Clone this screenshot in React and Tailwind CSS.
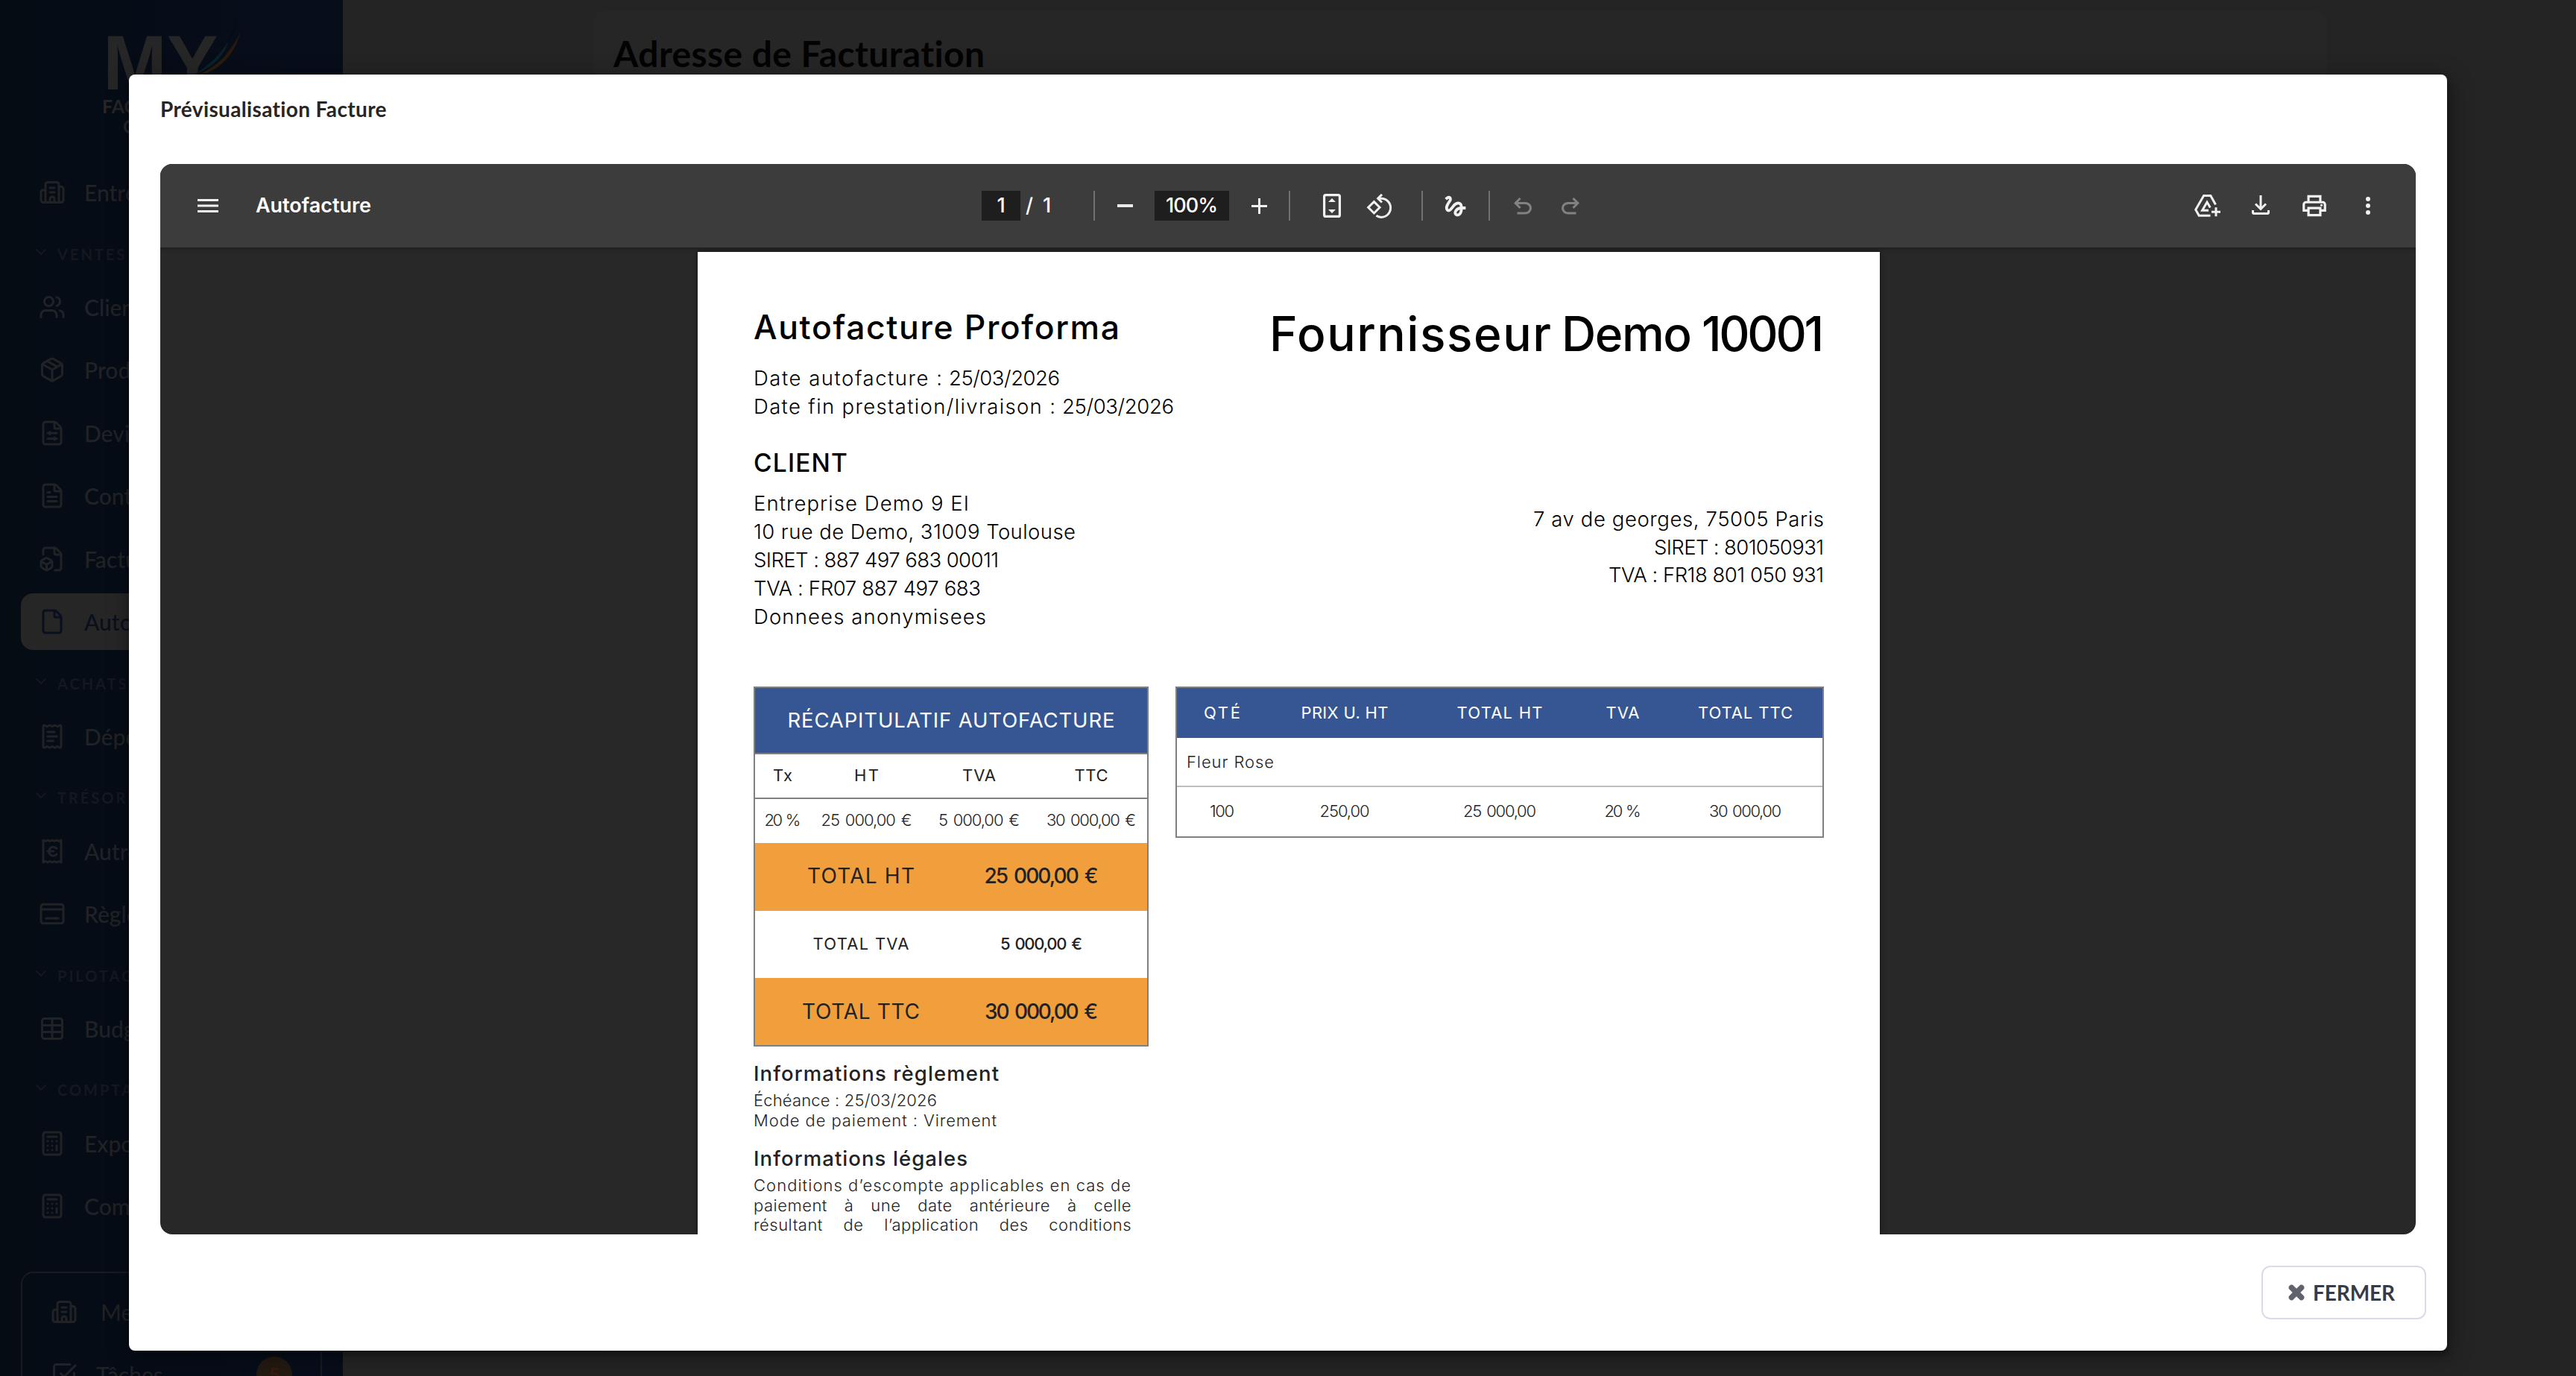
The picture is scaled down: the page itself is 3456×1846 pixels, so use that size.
import { useLayoutEffect, useRef, useState } from "react";
import {
  Building2, Users, Package, FileSliders, FileText, FileBox, File, ReceiptText,
  ReceiptEuro, Table, Calculator, SquareCheckBig, ChevronDown,
} from "lucide-react";
import { MdGesture, MdOutlinePrint } from "react-icons/md";

/* Tracks a single line of text so that it spans the requested width. */
function Fit({ w, className = "", children }) {
  const ref = useRef(null);
  const [ls, setLs] = useState(0);
  useLayoutEffect(() => {
    const el = ref.current;
    const natural = el.getBoundingClientRect().width;
    const n = Math.max(1, String(children).length - 1);
    setLs((w - natural) / n);
  }, []);
  return (
    <span
      ref={ref}
      className={"inline-block whitespace-pre " + className}
      style={{ letterSpacing: ls + "px", marginRight: -ls + "px" }}
    >
      {children}
    </span>
  );
}

function CardIcon({ size = 36, strokeWidth = 2 }) {
  return (
    <svg width={size} height={size} viewBox="0 0 24 24" fill="none" stroke="currentColor" strokeWidth={strokeWidth} strokeLinecap="round" strokeLinejoin="round">
      <rect x="2" y="3.5" width="20" height="17" rx="2" />
      <path d="M2 8h20M6.5 16h11" />
    </svg>
  );
}

const NAV = [
  { icon: Building2, label: "Entreprise" },
  { section: "VENTES" },
  { icon: Users, label: "Clients" },
  { icon: Package, label: "Produits" },
  { icon: FileSliders, label: "Devis" },
  { icon: FileText, label: "Contrats" },
  { icon: FileBox, label: "Factures" },
  { icon: File, label: "Autofactures", active: true },
  { section: "ACHATS" },
  { icon: ReceiptText, label: "Dépenses" },
  { section: "TRÉSORERIE" },
  { icon: ReceiptEuro, label: "Autres" },
  { icon: CardIcon, label: "Règlements" },
  { section: "PILOTAGE" },
  { icon: Table, label: "Budget" },
  { section: "COMPTABILITÉ" },
  { icon: Calculator, label: "Exports" },
  { icon: Calculator, label: "Comptabilité" },
];

function Sidebar() {
  return (
    <aside className="w-[460px] h-[1846px] shrink-0 overflow-hidden bg-gradient-to-r from-[#060c14] to-[#070d1b] text-[#202225] font-['Lato',sans-serif]">
      <div className="relative h-[216px] text-[#262626]">
        <div className="pt-[28px] pl-[138px] font-['Liberation_Sans',sans-serif] font-bold text-[103px] leading-[113px] h-[129px]">MY</div>
        <div className="pl-[137px] w-[330px] font-bold text-[25px] leading-[27px]">FACTURES</div>
        <div className="pl-[165px] font-bold text-[24px] leading-[27px]">CLOUD</div>
        <svg className="absolute left-[255px] top-[16px]" width="70" height="90" viewBox="0 0 70 90">
          <path d="M63 4C61 32 40 62 6 84C30 74 62 40 63 4Z" fill="#040817" />
          <path d="M52 38C42 56 26 70 8 83C28 76 46 60 52 38Z" fill="#0b2029" />
          <path d="M67 28C56 54 38 72 10 85C36 82 60 58 67 28Z" fill="#2a1c0c" />
          <path d="M67 28C60 42 54 50 46 58C58 50 64 40 67 28Z" fill="#2b140c" />
        </svg>
      </div>
      <nav>
        {NAV.map((item) =>
          item.section ? (
            <div key={item.section} className="h-[69.2px] pl-[43px] pt-[24px] flex items-start text-[#14181f]">
              <ChevronDown size={24} strokeWidth={2} className="mt-px" />
              <span className="ml-[10px] mt-[4px] text-[20px] leading-[24px] font-bold tracking-[3px]">{item.section}</span>
            </div>
          ) : (
            <div key={item.label} className="h-[84.5px] px-[28px] flex items-center">
              <div className={item.active ? "flex-1 h-[76px] pl-[24px] flex items-center rounded-2xl bg-[#262626] text-[#090f1c]" : "flex-1 h-[76px] pl-[24px] flex items-center"}>
                <item.icon size={36} strokeWidth={2} />
                <span className="ml-[25px] text-[30px] leading-[36px] font-medium">{item.label}</span>
              </div>
            </div>
          )
        )}
      </nav>
      <div className="mt-[46px] mx-[28px] h-[220px] rounded-2xl border-2 border-[#171b22]">
        <div className="h-[104px] pl-[38px] flex items-center">
          <Building2 size={36} />
          <span className="ml-[31px] text-[30px]">Messages</span>
        </div>
        <div className="h-[64px] pl-[38px] flex items-center">
          <SquareCheckBig size={36} />
          <span className="ml-[25px] text-[30px]">Tâches</span>
          <span className="ml-auto mr-[38px] size-[48px] rounded-full bg-[#231a12] text-[#3b1a0c] text-[26px] font-bold flex items-center justify-center">5</span>
        </div>
      </div>
    </aside>
  );
}

const Sep = ({ className }) => <div className={"w-[2px] h-[40px] bg-[#717171] " + className} />;

function Toolbar() {
  return (
    <div className="h-[112px] bg-[#3c3c3c] flex items-center text-[#f1f1f1] font-['Inter',sans-serif] relative shadow-[0_1px_5px_rgba(0,0,0,.35)]">
      <div className="w-[1102px] pl-[50px] flex items-center">
        <svg width="28" height="18" viewBox="0 0 28 18" fill="currentColor">
          <path d="M0 0h28v3H0zM0 7.5h28v3H0zM0 15h28v3H0z" />
        </svg>
        <div className="ml-[50px] text-[27px] font-semibold text-white leading-[36px]"><Fit w={155}>Autofacture</Fit></div>
      </div>
      <div className="flex items-center text-[27px] font-medium text-white">
        <div className="w-[52px] h-[40px] bg-[#1e1e1e] flex items-center justify-center">1</div>
        <span className="ml-[7px] w-[10px]">/</span>
        <span className="ml-[13px] w-[14px]">1</span>
        <Sep className="ml-[54px]" />
        <div className="ml-[30px] w-[21px] h-[4px] bg-[#e8eaec]" />
        <div className="ml-[29px] w-[100px] h-[40px] bg-[#1e1e1e] flex items-center justify-center"><Fit w={70}>100%</Fit></div>
        <svg className="ml-[30px]" width="21" height="21" viewBox="0 0 21 21" fill="#f1f1f1"><path d="M9 0h3v9h9v3h-9v9H9v-9H0V9h9z" /></svg>
        <Sep className="ml-[29px]" />
        <svg className="ml-[44px]" width="24" height="32" viewBox="0 0 24 32" fill="none">
          <rect x="1.6" y="1.6" width="20.8" height="28.8" rx="2" stroke="#f1f1f1" strokeWidth="3.2" />
          <path d="M12 6l5 5H7zM12 26l5-5H7z" fill="#f1f1f1" />
        </svg>
        <svg className="ml-[34px]" width="35" height="33" viewBox="0 0 35 33" fill="none" stroke="#f1f1f1" strokeWidth="3">
          <path d="M10.4 10.6L18.1 18.3L10.4 26L2.7 18.3Z" />
          <path d="M16.5 6.2H20a12.6 12.6 0 0 1 0 25.2c-2.500-.1-4.600-.8-6.600-2.100" />
          <path d="M21 .9L15.700 6.200L21 11.500" />
        </svg>
        <Sep className="ml-[39px]" />
        <MdGesture className="ml-[25px] mr-px text-[#f1f1f1]" size={37} />
        <Sep className="ml-[25px]" />
        <svg className="ml-[26px] mt-[2px]" width="36" height="36" viewBox="0 0 24 24" fill="#828282">
          <path d="M7 19v-2h7.100q1.575 0 2.738-1T18 13.500 16.838 11 14.100 10H7.800l2.600 2.600L9 14 4 9l5-5 1.400 1.400L7.800 8h6.300q2.425 0 4.163 1.575T20 13.500t-1.737 3.925T14.100 19z" />
        </svg>
        <svg className="ml-[28px] mt-[2px] -scale-x-100" width="36" height="36" viewBox="0 0 24 24" fill="#828282">
          <path d="M7 19v-2h7.100q1.575 0 2.738-1T18 13.500 16.838 11 14.100 10H7.800l2.600 2.600L9 14 4 9l5-5 1.400 1.400L7.800 8h6.300q2.425 0 4.163 1.575T20 13.500t-1.737 3.925T14.100 19z" />
        </svg>
      </div>
      <div className="ml-auto pr-[61px] flex items-center">
        <svg width="36" height="30" viewBox="0 0 36 30" fill="none" stroke="currentColor" strokeWidth="3">
          <path d="M28.500 13.500L21.800 1.500H12.600L1.700 20.200L6.200 28.200H21.500" />
          <path d="M21.300 17.500L17 10.200L10.600 21.300H19" />
          <path d="M29 17.200v12M23 23.200h12" />
        </svg>
        <svg className="ml-[41px] -mt-[2px]" width="24" height="26" viewBox="0 0 24 26" fill="none" stroke="currentColor" strokeWidth="3">
          <path d="M12 0v18M5 11.500l7 7 7-7M1.500 20v3q0 1.500 1.500 1.500h18q1.500 0 1.500-1.500v-3" />
        </svg>
        <MdOutlinePrint className="ml-[41px]" size={38} />
        <svg className="ml-[50px]" width="6" height="24" viewBox="0 0 6 24" fill="currentColor">
          <circle cx="3" cy="3" r="3" /><circle cx="3" cy="12" r="3" /><circle cx="3" cy="21" r="3" />
        </svg>
      </div>
    </div>
  );
}

const CLIENT = [
  ["Entreprise Demo 9 EI", 289], ["10 rue de Demo, 31009 Toulouse", 432], ["SIRET : 887 497 683 00011", 329],
  ["TVA : FR07 887 497 683", 305], ["Donnees anonymisees", 312],
];
const SUPPLIER = [["7 av de georges, 75005 Paris", 390], ["SIRET : 801050931", 228], ["TVA : FR18 801 050 931", 289]];

function Lines({ rows, className }) {
  return (
    <div className={className}>
      {rows.map(([t, w]) => <div key={t}><Fit w={w}>{t}</Fit></div>)}
    </div>
  );
}

function Cell({ t, w, className = "" }) {
  return <div className={"flex items-center justify-center " + className}><Fit w={w}>{t}</Fit></div>;
}

function SummaryTable() {
  return (
    <div className="w-[530px] h-[483px] border-2 border-[#808080] text-[22px] text-[#222]">
      <div className="h-[87px] bg-[#355693] text-white text-[27.5px] flex items-center justify-center"><Fit w={439}>RÉCAPITULATIF AUTOFACTURE</Fit></div>
      <div className="h-[62px] pb-px border-y-2 border-[#808080] grid grid-cols-[74px_151px_151px_150px]">
        <Cell t="Tx" w={26} /><Cell t="HT" w={33} /><Cell t="TVA" w={45} /><Cell t="TTC" w={45} />
      </div>
      <div className="h-[59px] pb-[2px] grid grid-cols-[74px_151px_151px_150px] font-[350] [word-spacing:0.12em]">
        <Cell t="20 %" w={49} /><Cell t="25 000,00 €" w={122} /><Cell t="5 000,00 €" w={109} /><Cell t="30 000,00 €" w={120} />
      </div>
      <div className="h-[91px] pb-[3px] px-[21px] bg-[#f19f3c] grid grid-cols-2 text-[28px]">
        <Cell t="TOTAL HT" w={144} /><Cell t="25 000,00 €" w={153} className="font-medium [word-spacing:0.12em]" />
      </div>
      <div className="h-[90px] pb-[2px] px-[21px] grid grid-cols-2">
        <Cell t="TOTAL TVA" w={129} /><Cell t="5 000,00 €" w={110} className="font-medium [word-spacing:0.12em]" />
      </div>
      <div className="h-[90px] pb-[1px] px-[21px] bg-[#f19f3c] grid grid-cols-2 text-[28px]">
        <Cell t="TOTAL TTC" w={158} /><Cell t="30 000,00 €" w={152} className="font-medium [word-spacing:0.12em]" />
      </div>
    </div>
  );
}

function ItemsTable() {
  return (
    <div className="w-[870px] h-[203px] border-2 border-[#808080] text-[22px] text-[#222]">
      <div className="h-[67px] pb-px bg-[#355693] text-white grid grid-cols-[121px_208px_208px_122px_207px]">
        <Cell t="QTÉ" w={49} /><Cell t="PRIX U. HT" w={117} /><Cell t="TOTAL HT" w={115} /><Cell t="TVA" w={45} /><Cell t="TOTAL TTC" w={127} />
      </div>
      <div className="h-[66px] border-b-2 border-[#bdbdbd] pl-[13px] flex items-center font-[350]"><Fit w={117}>Fleur Rose</Fit></div>
      <div className="h-[66px] pb-[2px] grid grid-cols-[121px_208px_208px_122px_207px] font-[350] [word-spacing:0.1em]">
        <Cell t="100" w={33} /><Cell t="250,00" w={67} /><Cell t="25 000,00" w={98} /><Cell t="20 %" w={49} /><Cell t="30 000,00" w={97} />
      </div>
    </div>
  );
}

function InvoicePage() {
  return (
    <div className="w-[1586px] h-[1318px] mt-[6px] ml-[721px] px-[75px] bg-white text-black font-['Inter',sans-serif] overflow-hidden shadow-[0_0_6px_rgba(0,0,0,.5)]">
      <div className="h-[583px] flex justify-between">
        <div>
          <div className="mt-[73px] text-[44.5px] leading-[56px] font-medium"><Fit w={491}>Autofacture Proforma</Fit></div>
          <div className="mt-[21px] text-[27.5px] leading-[38px] font-[350]">
            <div className="flex gap-[9px]"><Fit w={253}>Date autofacture :</Fit><Fit w={149}>25/03/2026</Fit></div>
            <div className="flex gap-[9px]"><Fit w={405}>Date fin prestation/livraison :</Fit><Fit w={150}>25/03/2026</Fit></div>
          </div>
          <div className="mt-[37px] text-[33.500px] leading-[40px] font-medium"><Fit w={126}>CLIENT</Fit></div>
          <Lines rows={CLIENT} className="mt-[15px] text-[27.5px] leading-[38px] font-[350]" />
        </div>
        <div className="text-right">
          <div className="mt-[70px] flex justify-end text-[64px] leading-[80px] font-medium">
            <Fit w={378}>Fournisseur</Fit><Fit w={175} className="ml-[14px]">Demo</Fit><Fit w={164} className="ml-[13px]">10001</Fit>
          </div>
          <Lines rows={SUPPLIER} className="mt-[190px] text-[27.5px] leading-[37.500px] font-[350]" />
        </div>
      </div>
      <div className="flex justify-between">
        <SummaryTable />
        <ItemsTable />
      </div>
      <div className="w-[507px] text-[22px] leading-[27px] text-[#222] font-[350]">
        <div className="mt-[20px] text-[27.5px] leading-[32px] font-medium"><Fit w={329}>Informations règlement</Fit></div>
        <Lines rows={[["Échéance : 25/03/2026", 246], ["Mode de paiement : Virement", 326]]} className="mt-[7px]" />
        <div className="mt-[21px] text-[27.5px] leading-[32px] font-medium"><Fit w={287}>Informations légales</Fit></div>
        <div className="mt-[7px] leading-[26.700px]">
          <div><Fit w={506}>Conditions d’escompte applicables en cas de</Fit></div>
          <div className="[text-align-last:justify] tracking-[0.5px]">paiement à une date antérieure à celle</div>
          <div className="[text-align-last:justify] tracking-[0.5px]">résultant de l’application des conditions</div>
        </div>
      </div>
    </div>
  );
}

function Modal() {
  return (
    <div className="w-[3110px] h-[1712px] rounded-lg bg-white flex flex-col shadow-[2px_6px_6px_0_rgba(0,0,0,.25),2px_6px_30px_4px_rgba(0,0,0,.3)] font-['Lato',sans-serif]">
      <div className="h-[120px] pl-[42px] pt-[28px] text-[28px] leading-[36px] font-bold text-[#262626]"><Fit w={304}>Prévisualisation Facture</Fit></div>
      <div className="ml-[42px] w-[3026px] h-[1436px] rounded-2xl overflow-hidden bg-[#282828]">
        <Toolbar />
        <InvoicePage />
      </div>
      <div className="flex justify-end pt-[42px] pr-[28px]">
        <button className="w-[221px] h-[72px] rounded-xl border-2 border-[#dcdae8] flex items-center pl-[34px] text-[28px] font-bold text-[#363b45]">
          <svg width="22" height="22" viewBox="0 0 22 22" stroke="#5f636b" strokeWidth="7" strokeLinejoin="round" fill="none">
            <path d="M3 3L19 19M19 3L3 19" />
            <path d="M4.200 4.200L17.800 17.800M17.800 4.200L4.200 17.800" strokeLinecap="round" />
          </svg>
          <span className="ml-[11px]"><Fit w={110}>FERMER</Fit></span>
        </button>
      </div>
    </div>
  );
}

export default function App() {
  return (
    <div className="relative w-[3456px] h-[1846px] overflow-hidden bg-[#242424] flex">
      <Sidebar />
      <main className="flex-1 pt-[14px] pl-[336px] font-['Lato',sans-serif]">
        <div className="w-[2326px] h-[1800px] rounded-2xl bg-[#262626] pl-[27px] pt-[28px] text-[48px] leading-[60px] font-bold text-[#030303]">
          <Fit w={499}>Adresse de Facturation</Fit>
        </div>
      </main>
      <div className="absolute inset-0 pt-[100px] pl-[173px]">
        <Modal />
      </div>
    </div>
  );
}
